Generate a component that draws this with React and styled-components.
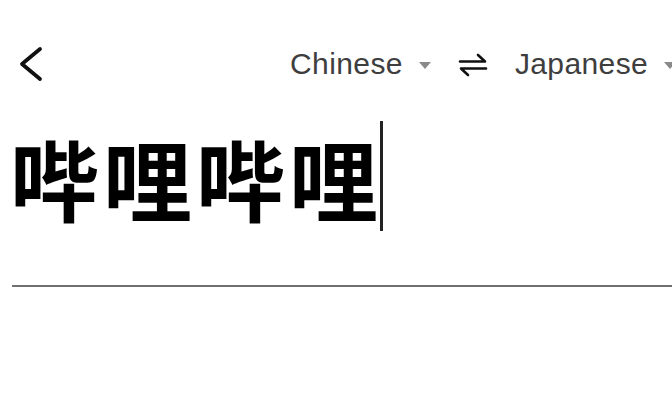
import React from 'react';
import styled, { createGlobalStyle } from 'styled-components';

const Global = createGlobalStyle`
  html, body { margin: 0; padding: 0; background: #fff; overflow: hidden; }
  body { font-family: "Liberation Sans", "Noto Sans CJK SC", sans-serif; }
`;

const Page = styled.div`
  width: 672px;
  height: 420px;
  overflow: hidden;
  background: #fff;
`;

const Header = styled.div`
  display: flex;
  align-items: center;
  height: 40px;
  padding: 44px 0 0 16px;
  white-space: nowrap;
`;

const BackButton = styled.button`
  border: none;
  background: none;
  padding: 0;
  width: 30px;
  height: 40px;
  display: flex;
  align-items: center;
  cursor: pointer;
`;

const LangGroup = styled.div`
  display: flex;
  align-items: center;
  margin-left: 246px;
  flex-shrink: 0;
`;

const Lang = styled.div`
  display: flex;
  align-items: center;
  gap: 16px;
  font-size: 30px;
  letter-spacing: 0.4px;
  color: #3e3e3e;
  margin-right: ${p => p.$gap || 0}px;
`;

const Caret = styled.span`
  width: 0;
  height: 0;
  border-left: 6px solid transparent;
  border-right: 6px solid transparent;
  border-top: 7px solid #8a8a8a;
  margin-top: 3px;
`;

const Swap = styled.svg`
  margin-right: 27px;
  margin-top: 2px;
`;

const Input = styled.div`
  display: flex;
  align-items: center;
  margin: 36px 0 0 10px;
  height: 112px;
  font-family: "Noto Sans CJK SC", sans-serif;
  font-weight: 600;
  font-size: 89px;
  line-height: 1;
  color: #000;
  letter-spacing: 4px;
`;

const Cursor = styled.span`
  display: inline-block;
  width: 3px;
  height: 110px;
  background: #222;
  margin-left: -2px;
`;

const Divider = styled.div`
  margin: 53px 0 0 12px;
  height: 2px;
  background: #707070;
`;

export default function App() {
  return (
    <Page>
      <Global />
      <Header>
        <BackButton aria-label="back">
          <svg width="28" height="38" viewBox="0 0 28 38">
            <path d="M24 4 L6 19 L24 34" fill="none" stroke="#111" strokeWidth="3.8" strokeLinecap="round" strokeLinejoin="round" />
          </svg>
        </BackButton>
        <LangGroup>
          <Lang $gap={27}>Chinese<Caret /></Lang>
          <Swap width="30" height="24" viewBox="0 0 30 24">
            <path d="M2 8.5 H27 L20 2" fill="none" stroke="#111" strokeWidth="2.6" strokeLinecap="round" strokeLinejoin="round" />
            <path d="M28 15.5 H3 L10 22" fill="none" stroke="#111" strokeWidth="2.6" strokeLinecap="round" strokeLinejoin="round" />
          </Swap>
          <Lang>Japanese<Caret /></Lang>
        </LangGroup>
      </Header>
      <Input>
        <span>哔哩哔哩</span>
        <Cursor />
      </Input>
      <Divider />
    </Page>
  );
}
